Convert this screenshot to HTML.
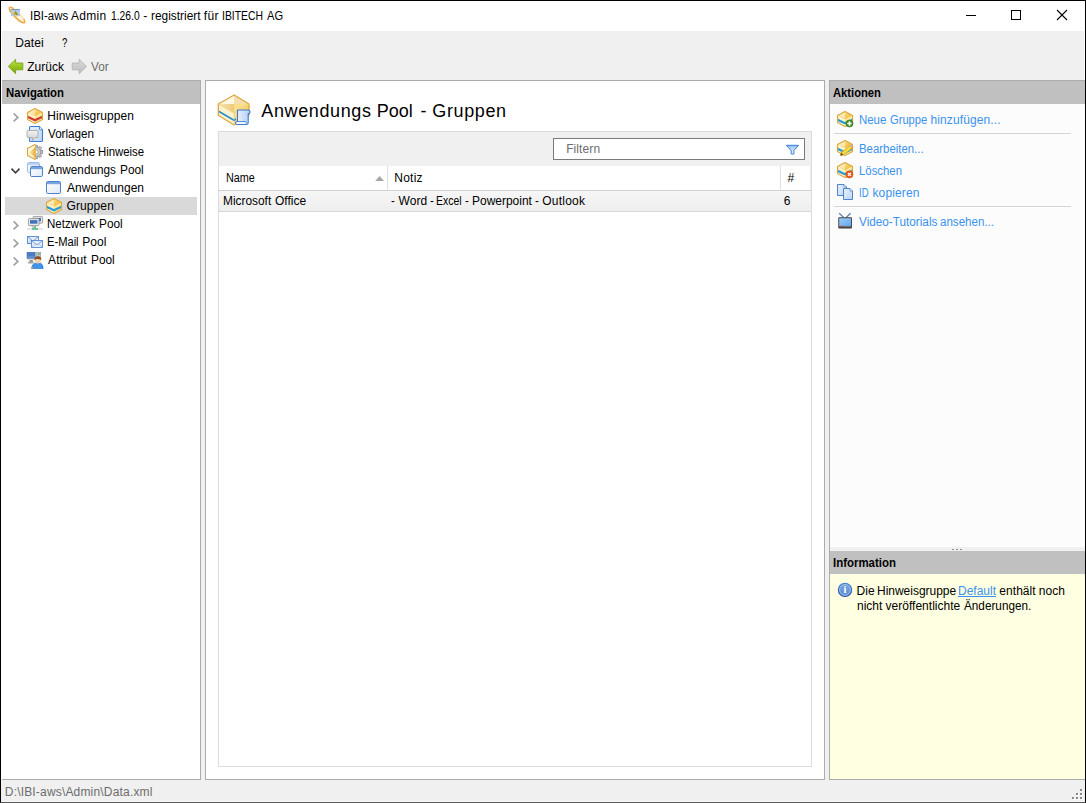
<!DOCTYPE html>
<html lang="de"><head><meta charset="utf-8"><title>IBI-aws Admin</title>
<style>
html,body{margin:0;padding:0;}
body{width:1086px;height:803px;overflow:hidden;background:#f0f0f0;position:relative;font-family:"Liberation Sans",sans-serif;font-size:12px;}
.a{position:absolute;box-sizing:border-box;}
.t{position:absolute;white-space:pre;transform-origin:0 0;font-family:"Liberation Sans",sans-serif;}
svg{position:absolute;overflow:visible;}
</style></head><body>

<div class="a" style="left:0;top:0;width:1086px;height:803px;border:1px solid #000;border-bottom-color:#555;z-index:50;pointer-events:none"></div>
<div class="a" style="left:1px;top:1px;width:1084px;height:30px;background:#fff"></div>
<div class="a" style="left:1px;top:31px;width:1px;height:749px;background:#fff;z-index:49"></div>
<div class="a" style="left:1084px;top:31px;width:1px;height:49px;background:#fff;z-index:49"></div>
<div class="a" style="left:1px;top:801px;width:1084px;height:1px;background:#fafafa;z-index:49"></div>
<!-- nav panel -->
<div class="a" style="left:2px;top:80px;width:199px;height:700px;background:#fff;border:1px solid #ababab;border-left:none"></div>
<div class="a" style="left:2px;top:81px;width:198px;height:23px;background:#c0c0c0"></div>
<div class="a" style="left:5px;top:197px;width:192px;height:18px;background:#d9d9d9"></div>
<!-- main panel -->
<div class="a" style="left:205px;top:80px;width:620px;height:700px;background:#fff;border:1px solid #ababab"></div>
<div class="a" style="left:218px;top:131px;width:594px;height:636px;background:#fff;border:1px solid #dcdcdc"></div>
<div class="a" style="left:219px;top:132px;width:592px;height:34px;background:#f0f0f0"></div>
<div class="a" style="left:553px;top:138px;width:252px;height:22px;background:#fff;border:1px solid #7a7a7a"></div>
<div class="a" style="left:219px;top:190px;width:592px;height:1px;background:#d0d0d0"></div>
<div class="a" style="left:387px;top:166px;width:1px;height:24px;background:#e0e0e0"></div>
<div class="a" style="left:780px;top:166px;width:1px;height:24px;background:#e0e0e0"></div>
<div class="a" style="left:810px;top:166px;width:1px;height:24px;background:#ececec"></div>
<div class="a" style="left:219px;top:191px;width:592px;height:20px;background:linear-gradient(#f6f6f6,#eeeeee)"></div>
<div class="a" style="left:219px;top:211px;width:592px;height:1px;background:#d8d8d8"></div>
<!-- right panel -->
<div class="a" style="left:829px;top:80px;width:256px;height:700px;background:#fcfcfc;border:1px solid #ababab;border-right:none"></div>
<div class="a" style="left:830px;top:81px;width:255px;height:23px;background:#c0c0c0"></div>
<div class="a" style="left:834px;top:133px;width:237px;height:1px;background:#d6d6d6"></div>
<div class="a" style="left:834px;top:206px;width:237px;height:1px;background:#d6d6d6"></div>
<div class="a" style="left:830px;top:547px;width:255px;height:4px;background:#f0f0f0"></div>
<div class="a" style="left:830px;top:551px;width:255px;height:23px;background:#c0c0c0"></div>
<div class="a" style="left:830px;top:574px;width:255px;height:205px;background:#ffffe1"></div>

<span class="t" style="left:29.62px;top:7.84px;font-size:12px;line-height:16px;color:#000;transform:scaleX(0.9528);">IBI-aws </span>
<span class="t" style="left:70.98px;top:7.84px;font-size:12px;line-height:16px;color:#000;letter-spacing:0.276px;">Admin </span>
<span class="t" style="left:110.69px;top:7.84px;font-size:12px;line-height:16px;color:#000;transform:scaleX(0.8598);">1.26.0 </span>
<span class="t" style="left:143.26px;top:7.84px;font-size:12px;line-height:16px;color:#000;">- </span>
<span class="t" style="left:150.97px;top:7.84px;font-size:12px;line-height:16px;color:#000;transform:scaleX(0.9914);">registriert </span>
<span class="t" style="left:203.78px;top:7.84px;font-size:12px;line-height:16px;color:#000;letter-spacing:0.324px;">für </span>
<span class="t" style="left:222.31px;top:7.84px;font-size:12px;line-height:16px;color:#000;transform:scaleX(0.8668);">IBITECH </span>
<span class="t" style="left:266.90px;top:7.84px;font-size:12px;line-height:16px;color:#000;transform:scaleX(0.9285);">AG</span>
<span class="t" style="left:15.30px;top:34.84px;font-size:12px;line-height:16px;color:#000;letter-spacing:0.104px;">Datei</span>
<span class="t" style="left:61.96px;top:34.84px;font-size:12px;line-height:16px;color:#000;transform:scaleX(0.8000);">?</span>
<span class="t" style="left:27.17px;top:58.84px;font-size:12px;line-height:16px;color:#000;letter-spacing:0.012px;">Zurück</span>
<span class="t" style="left:90.58px;top:58.84px;font-size:12px;line-height:16px;color:#6d6d6d;transform:scaleX(0.9747);">Vor</span>
<span class="t" style="left:5.61px;top:85.24px;font-size:12px;line-height:16px;color:#000;font-weight:700;transform:scaleX(0.9446);">Navigation</span>
<span class="t" style="left:833.41px;top:85.24px;font-size:12px;line-height:16px;color:#000;font-weight:700;transform:scaleX(0.9337);">Aktionen</span>
<span class="t" style="left:833.10px;top:555.24px;font-size:12px;line-height:16px;color:#000;font-weight:700;transform:scaleX(0.9525);">Information</span>
<span class="t" style="left:47.30px;top:107.84px;font-size:12px;line-height:16px;color:#000;letter-spacing:0.035px;">Hinweisgruppen</span>
<span class="t" style="left:48.08px;top:125.84px;font-size:12px;line-height:16px;color:#000;transform:scaleX(0.9711);">Vorlagen</span>
<span class="t" style="left:47.57px;top:143.84px;font-size:12px;line-height:16px;color:#000;transform:scaleX(0.9519);">Statische </span>
<span class="t" style="left:97.55px;top:143.84px;font-size:12px;line-height:16px;color:#000;transform:scaleX(0.9475);">Hinweise</span>
<span class="t" style="left:48.08px;top:161.84px;font-size:12px;line-height:16px;color:#000;transform:scaleX(0.9785);">Anwendungs </span>
<span class="t" style="left:119.81px;top:161.84px;font-size:12px;line-height:16px;color:#000;transform:scaleX(0.9873);">Pool</span>
<span class="t" style="left:66.98px;top:179.84px;font-size:12px;line-height:16px;color:#000;letter-spacing:0.034px;">Anwendungen</span>
<span class="t" style="left:66.59px;top:197.84px;font-size:12px;line-height:16px;color:#000;letter-spacing:0.089px;">Gruppen</span>
<span class="t" style="left:47.34px;top:215.84px;font-size:12px;line-height:16px;color:#000;transform:scaleX(0.9573);">Netzwerk </span>
<span class="t" style="left:98.71px;top:215.84px;font-size:12px;line-height:16px;color:#000;transform:scaleX(0.9873);">Pool</span>
<span class="t" style="left:47.37px;top:233.84px;font-size:12px;line-height:16px;color:#000;transform:scaleX(0.9292);">E-Mail </span>
<span class="t" style="left:82.30px;top:233.84px;font-size:12px;line-height:16px;color:#000;letter-spacing:0.072px;">Pool</span>
<span class="t" style="left:48.08px;top:251.84px;font-size:12px;line-height:16px;color:#000;letter-spacing:0.065px;">Attribut </span>
<span class="t" style="left:90.71px;top:251.84px;font-size:12px;line-height:16px;color:#000;transform:scaleX(0.9873);">Pool</span>
<span class="t" style="left:261.28px;top:98.76px;font-size:18px;line-height:24px;color:#000;letter-spacing:0.627px;">Anwendungs </span>
<span class="t" style="left:376.67px;top:98.76px;font-size:18px;line-height:24px;color:#000;letter-spacing:0.002px;">Pool </span>
<span class="t" style="left:420.47px;top:98.76px;font-size:18px;line-height:24px;color:#000;">- </span>
<span class="t" style="left:432.37px;top:98.76px;font-size:18px;line-height:24px;color:#000;letter-spacing:0.611px;">Gruppen</span>
<span class="t" style="left:566.20px;top:141.24px;font-size:12px;line-height:16px;color:#6d6d6d;letter-spacing:0.088px;">Filtern</span>
<span class="t" style="left:225.80px;top:169.84px;font-size:12px;line-height:16px;color:#000;transform:scaleX(0.9014);">Name</span>
<span class="t" style="left:394.30px;top:169.84px;font-size:12px;line-height:16px;color:#000;letter-spacing:0.219px;">Notiz</span>
<span class="t" style="left:787.48px;top:169.84px;font-size:12px;line-height:16px;color:#000;">#</span>
<span class="t" style="left:222.71px;top:192.84px;font-size:12px;line-height:16px;color:#000;transform:scaleX(0.9906);">Microsoft </span>
<span class="t" style="left:274.75px;top:192.84px;font-size:12px;line-height:16px;color:#000;transform:scaleX(0.9994);">Office</span>
<span class="t" style="left:391.29px;top:192.84px;font-size:12px;line-height:16px;color:#000;transform:scaleX(0.9534);">- </span>
<span class="t" style="left:398.43px;top:192.84px;font-size:12px;line-height:16px;color:#000;letter-spacing:0.136px;">Word </span>
<span class="t" style="left:430.39px;top:192.84px;font-size:12px;line-height:16px;color:#000;transform:scaleX(0.9534);">- </span>
<span class="t" style="left:436.43px;top:192.84px;font-size:12px;line-height:16px;color:#000;transform:scaleX(0.8687);">Excel </span>
<span class="t" style="left:465.39px;top:192.84px;font-size:12px;line-height:16px;color:#000;transform:scaleX(0.9534);">- </span>
<span class="t" style="left:471.50px;top:192.84px;font-size:12px;line-height:16px;color:#000;transform:scaleX(0.9973);">Powerpoint </span>
<span class="t" style="left:535.39px;top:192.84px;font-size:12px;line-height:16px;color:#000;transform:scaleX(0.9534);">- </span>
<span class="t" style="left:542.15px;top:192.84px;font-size:12px;line-height:16px;color:#000;letter-spacing:0.246px;">Outlook</span>
<span class="t" style="left:783.69px;top:192.84px;font-size:12px;line-height:16px;color:#000;">6</span>
<span class="t" style="left:858.75px;top:112.24px;font-size:12px;line-height:16px;color:#3a92ee;transform:scaleX(0.9529);">Neue </span>
<span class="t" style="left:890.23px;top:112.24px;font-size:12px;line-height:16px;color:#3a92ee;transform:scaleX(0.9307);">Gruppe </span>
<span class="t" style="left:930.44px;top:112.24px;font-size:12px;line-height:16px;color:#3a92ee;letter-spacing:0.118px;">hinzufügen...</span>
<span class="t" style="left:858.75px;top:141.24px;font-size:12px;line-height:16px;color:#3a92ee;transform:scaleX(0.9489);">Bearbeiten...</span>
<span class="t" style="left:858.75px;top:163.24px;font-size:12px;line-height:16px;color:#3a92ee;transform:scaleX(0.9481);">Löschen</span>
<span class="t" style="left:858.79px;top:185.24px;font-size:12px;line-height:16px;color:#3a92ee;transform:scaleX(0.8000);">ID </span>
<span class="t" style="left:872.47px;top:185.24px;font-size:12px;line-height:16px;color:#3a92ee;letter-spacing:0.131px;">kopieren</span>
<span class="t" style="left:859.48px;top:214.24px;font-size:12px;line-height:16px;color:#3a92ee;transform:scaleX(0.9794);">Video-Tutorials </span>
<span class="t" style="left:940.48px;top:214.24px;font-size:12px;line-height:16px;color:#3a92ee;transform:scaleX(0.9645);">ansehen...</span>
<span class="t" style="left:856.50px;top:583.44px;font-size:12px;line-height:16px;color:#000;letter-spacing:0.095px;">Die </span>
<span class="t" style="left:876.50px;top:583.44px;font-size:12px;line-height:16px;color:#000;transform:scaleX(0.9976);">Hinweisgruppe</span>
<span class="t" style="left:958.00px;top:583.44px;font-size:12px;line-height:16px;color:#3a92ee;transform:scaleX(0.9983);text-decoration:underline;">Default</span>
<span class="t" style="left:999.29px;top:583.44px;font-size:12px;line-height:16px;color:#000;letter-spacing:0.058px;">enthält </span>
<span class="t" style="left:1038.74px;top:583.44px;font-size:12px;line-height:16px;color:#000;letter-spacing:0.048px;">noch</span>
<span class="t" style="left:856.74px;top:598.44px;font-size:12px;line-height:16px;color:#000;transform:scaleX(0.9976);">nicht </span>
<span class="t" style="left:885.58px;top:598.44px;font-size:12px;line-height:16px;color:#000;letter-spacing:0.009px;">veröffentlichte </span>
<span class="t" style="left:963.98px;top:598.44px;font-size:12px;line-height:16px;color:#000;transform:scaleX(0.9789);">Änderungen.</span>
<span class="t" style="left:4.80px;top:784.24px;font-size:12px;line-height:16px;color:#6d6d6d;letter-spacing:0.177px;">D:\IBI-aws\Admin\Data.xml</span>

<svg class="ic" style="left:0;top:0;z-index:10" width="1086" height="803" viewBox="0 0 1086 803">

<defs>
<linearGradient id="gTop" x1="0" y1="0" x2="1" y2="1"><stop offset="0" stop-color="#fff6d8"/><stop offset="0.5" stop-color="#f8cf62"/><stop offset="1" stop-color="#f2b22e"/></linearGradient>
<linearGradient id="gLeft" x1="0" y1="0" x2="0" y2="1"><stop offset="0" stop-color="#fdeebb"/><stop offset="1" stop-color="#fffbe6"/></linearGradient>
<linearGradient id="gRight" x1="0" y1="0" x2="1" y2="1"><stop offset="0" stop-color="#fbe07a"/><stop offset="1" stop-color="#fdf2c0"/></linearGradient>
<linearGradient id="gGreen" x1="0" y1="0" x2="0" y2="1"><stop offset="0" stop-color="#c3e356"/><stop offset="0.5" stop-color="#98c61f"/><stop offset="1" stop-color="#78a512"/></linearGradient>
<linearGradient id="gGray" x1="0" y1="0" x2="0" y2="1"><stop offset="0" stop-color="#dcdcdc"/><stop offset="1" stop-color="#bcbcbc"/></linearGradient>
<linearGradient id="gWin" x1="0" y1="0" x2="1" y2="1"><stop offset="0" stop-color="#ffffff"/><stop offset="0.6" stop-color="#eef2fa"/><stop offset="1" stop-color="#dfe6f4"/></linearGradient>
<linearGradient id="gDoc" x1="0" y1="0" x2="1" y2="1"><stop offset="0" stop-color="#e8f1fd"/><stop offset="1" stop-color="#bcd5f5"/></linearGradient>
<linearGradient id="gBub" x1="0" y1="0" x2="0" y2="1"><stop offset="0" stop-color="#f2f2f2"/><stop offset="1" stop-color="#d0d0d0"/></linearGradient>
<linearGradient id="gInfo" x1="0" y1="0" x2="0" y2="1"><stop offset="0" stop-color="#7aa6de"/><stop offset="1" stop-color="#5b8fd2"/></linearGradient>
<linearGradient id="gInfoR" x1="0" y1="0" x2="0" y2="1"><stop offset="0" stop-color="#4a86d4"/><stop offset="1" stop-color="#2c4fa4"/></linearGradient>
<linearGradient id="gTv" x1="0" y1="0" x2="1" y2="1"><stop offset="0" stop-color="#9bcbf7"/><stop offset="1" stop-color="#62a8ee"/></linearGradient>
<linearGradient id="gFun" x1="0" y1="0" x2="0" y2="1"><stop offset="0" stop-color="#8fbdf0"/><stop offset="1" stop-color="#ffffff"/></linearGradient>
<linearGradient id="gScr" x1="0" y1="0" x2="1" y2="0"><stop offset="0" stop-color="#f4f8fe"/><stop offset="0.5" stop-color="#cfe0f8"/><stop offset="1" stop-color="#b4d0f4"/></linearGradient>
<linearGradient id="gBigR" x1="0" y1="0" x2="1" y2="1"><stop offset="0" stop-color="#fbe9b0"/><stop offset="1" stop-color="#f5bd3c"/></linearGradient>
<linearGradient id="gBigIn" x1="0" y1="0" x2="1" y2="0"><stop offset="0" stop-color="#f9e6b8"/><stop offset="1" stop-color="#efc878"/></linearGradient>
<linearGradient id="gHalf" x1="0" y1="0" x2="1" y2="0"><stop offset="0" stop-color="#fbe4a4"/><stop offset="1" stop-color="#f0b03a"/></linearGradient>
</defs>

<g><g transform="translate(17,15) rotate(45)"><ellipse cx="0" cy="0" rx="10.4" ry="2.8" fill="#fff3da" stroke="#f5cf8c" stroke-width="0.9"/><path d="M-10.4,0 A10.4,2.8 0 0 0 10.4,0" fill="none" stroke="#eaa63a" stroke-width="1.5"/><path d="M-10.6,0.6 A10.4,2.8 0 0 1 -6.6,-2.2" fill="none" stroke="#eeb04a" stroke-width="1.4"/><path d="M10.6,0.6 A10.4,2.8 0 0 0 7.6,-2" fill="none" stroke="#eeb04a" stroke-width="1.4"/></g><rect x="11" y="9" width="9" height="7" fill="#a9c9ec" opacity="0.92"/><rect x="11" y="9" width="9" height="1" fill="#7895b8"/><polygon points="15.6,10.6 18.3,15 13.2,15" fill="#a8901c"/><path d="M11.5,11.5 L17,16.6" stroke="#f1c46e" stroke-width="1.1" fill="none" opacity="0.8"/></g>
<polygon points="8.3,66.4 15.6,59.2 15.6,63 22.8,63 22.8,69.8 15.6,69.8 15.6,73.7" fill="url(#gGreen)" stroke="#7aa516" stroke-width="0.9" stroke-linejoin="round"/>
<polygon points="86.5,66.4 79.2,59.2 79.2,63 72.2,63 72.2,69.8 79.2,69.8 79.2,73.7" fill="url(#gGray)" stroke="#b4b4b4" stroke-width="0.9" stroke-linejoin="round"/>
<polyline points="13.6,113.4 17.8,117.4 13.6,121.4" fill="none" stroke="#a3a3a3" stroke-width="1.7"/>
<polyline points="13.6,221.4 17.8,225.4 13.6,229.4" fill="none" stroke="#a3a3a3" stroke-width="1.7"/>
<polyline points="13.6,239.4 17.8,243.4 13.6,247.4" fill="none" stroke="#a3a3a3" stroke-width="1.7"/>
<polyline points="13.6,257.4 17.8,261.4 13.6,265.4" fill="none" stroke="#a3a3a3" stroke-width="1.7"/>
<polyline points="11.5,168.6 15.5,172.8 19.5,168.6" fill="none" stroke="#404040" stroke-width="1.6"/>
<g transform="translate(27,108)"><polygon points="8,0.5 15.5,4.5 8,8.5 0.5,4.5" fill="url(#gTop)"/><polygon points="0.5,4.5 8,8.5 8,15.5 0.5,11.5" fill="url(#gLeft)"/><polygon points="8,8.5 15.5,4.5 15.5,11.5 8,15.5" fill="url(#gRight)"/><polygon points="8,1 8,8 2,4.6" fill="#fff" opacity="0.45"/><polygon points="1,7.8 8,11 15,7.8 15,10.3 8,13.6 1,10.3" fill="#cf3b2c"/><polygon points="8,0.5 15.5,4.5 15.5,11.5 8,15.5 0.5,11.5 0.5,4.5" fill="none" stroke="#dba83c" stroke-width="1.1" stroke-linejoin="round"/></g>
<g><path d="M30.5,126.5 H39.5 L42.5,129.8 V140.5 Q42.5,141.5 41.5,141.5 H30.5 Q29.5,141.5 29.5,140.5 V127.5 Q29.5,126.5 30.5,126.5 Z" fill="url(#gDoc)" stroke="#3f7dd0" stroke-width="1.1"/><path d="M39.5,126.5 V129.8 H42.5" fill="#eef5ff" stroke="#3f7dd0" stroke-width="0.8"/><path d="M28,130.5 H37 Q38,130.5 38,131.5 V136.5 Q38,137.5 37,137.5 H35 L32.3,140.6 V137.5 H28 Q27,137.5 27,136.5 V131.5 Q27,130.5 28,130.5 Z" fill="url(#gBub)" stroke="#a8a8a8" stroke-width="0.9"/></g>
<g><g transform="translate(36,152)"><g fill="#c2c2c2" stroke="#7d7d7d" stroke-width="0.6"><rect x="-1.5" y="-6.8" width="3" height="3.2" transform="rotate(0)"/><rect x="-1.5" y="-6.8" width="3" height="3.2" transform="rotate(45)"/><rect x="-1.5" y="-6.8" width="3" height="3.2" transform="rotate(90)"/><rect x="-1.5" y="-6.8" width="3" height="3.2" transform="rotate(135)"/><rect x="-1.5" y="-6.8" width="3" height="3.2" transform="rotate(180)"/><rect x="-1.5" y="-6.8" width="3" height="3.2" transform="rotate(225)"/><rect x="-1.5" y="-6.8" width="3" height="3.2" transform="rotate(270)"/><rect x="-1.5" y="-6.8" width="3" height="3.2" transform="rotate(315)"/></g><circle r="4.8" fill="#cdcdcd" stroke="#858585" stroke-width="0.6"/><circle r="2.1" fill="#fff" stroke="#8a8a8a" stroke-width="0.6"/></g><rect x="26" y="143" width="9.3" height="18" fill="#fff"/><polygon points="35.2,144.5 27.5,148.5 27.5,155.5 35.2,159.5" fill="#fdf1c9" stroke="#dba83c" stroke-width="1.1" stroke-linejoin="round"/><polygon points="35,147 35,157.6 29.6,152.3" fill="url(#gHalf)"/><polygon points="35,145.4 35,147 29.6,152.3 28.2,149" fill="#fffbea" opacity="0.9"/></g>
<g><rect x="27.5" y="162.5" width="12" height="10" rx="1.2" fill="url(#gWin)" stroke="#9dbbe6" stroke-width="1"/><rect x="28" y="163" width="11" height="2.2" fill="#bcd2f0"/></g>
<g><rect x="30.5" y="166.5" width="12" height="10" rx="1.2" fill="url(#gWin)" stroke="#4d82cc" stroke-width="1"/><rect x="31" y="167" width="11" height="2.2" fill="#76a5e0"/></g>
<g><rect x="46.5" y="181.5" width="14" height="12" rx="1.2" fill="url(#gWin)" stroke="#4d82cc" stroke-width="1"/><rect x="47" y="182" width="13" height="2.2" fill="#76a5e0"/></g>
<g transform="translate(46,198)"><polygon points="8,0.5 15.5,4.5 8,8.5 0.5,4.5" fill="url(#gTop)"/><polygon points="0.5,4.5 8,8.5 8,15.5 0.5,11.5" fill="url(#gLeft)"/><polygon points="8,8.5 15.5,4.5 15.5,11.5 8,15.5" fill="url(#gRight)"/><polygon points="8,1 8,8 2,4.6" fill="#fff" opacity="0.45"/><polygon points="1,7.8 8,11 15,7.8 15,10.3 8,13.6 1,10.3" fill="#2b9bd6"/><polygon points="8,0.5 15.5,4.5 15.5,11.5 8,15.5 0.5,11.5 0.5,4.5" fill="none" stroke="#dba83c" stroke-width="1.1" stroke-linejoin="round"/></g>
<g><rect x="33" y="216.4" width="9.6" height="6.8" rx="0.8" fill="#e9e9e9" stroke="#8c8c8c" stroke-width="0.8"/><rect x="34.6" y="217.9" width="6.3999999999999995" height="3.4" fill="#3f74bb"/><rect x="28.4" y="218.6" width="10.6" height="7" rx="0.8" fill="#e9e9e9" stroke="#8c8c8c" stroke-width="0.8"/><rect x="30.0" y="220.1" width="7.3999999999999995" height="3.6" fill="#3f74bb"/><rect x="32" y="225.6" width="3.4" height="1.6" fill="#c8c8c8" stroke="#9a9a9a" stroke-width="0.4"/><rect x="27" y="228.5" width="16" height="1" fill="#c9cdd2"/><rect x="32" y="228.3" width="6" height="1.4" fill="#3cb878"/><rect x="34.5" y="226.2" width="1.2" height="2.4" fill="#3cb878"/></g>
<g><rect x="27.5" y="236.5" width="11" height="7" fill="#e3edfb" stroke="#4d82cc" stroke-width="0.85"/><polyline points="28,237 33.0,240.96 38,237" fill="none" stroke="#6f9bd8" stroke-width="0.9"/><polyline points="28,243 31.32,239.84" fill="none" stroke="#9dbbe6" stroke-width="0.7"/><polyline points="38,243 34.68,239.84" fill="none" stroke="#9dbbe6" stroke-width="0.7"/></g>
<g><rect x="31.5" y="240.5" width="11" height="7" fill="#e3edfb" stroke="#4d82cc" stroke-width="0.85"/><polyline points="32,241 37.0,244.96 42,241" fill="none" stroke="#6f9bd8" stroke-width="0.9"/><polyline points="32,247 35.32,243.84" fill="none" stroke="#9dbbe6" stroke-width="0.7"/><polyline points="42,247 38.68,243.84" fill="none" stroke="#9dbbe6" stroke-width="0.7"/></g>
<g><rect x="27" y="252.2" width="8.2" height="6.4" fill="#4c7dc4" stroke="#3c66a8" stroke-width="0.5"/><rect x="27.8" y="256.6" width="6.6" height="0.8" fill="#88a9dc"/><rect x="27.4" y="258.8" width="7.4" height="1.2" fill="#d8d8d8"/><rect x="29.5" y="260" width="3.4" height="2.2" fill="#9a9a9a"/><rect x="28.2" y="262" width="5.6" height="1.2" rx="0.5" fill="#bdbdbd" stroke="#7a7a7a" stroke-width="0.4"/><rect x="36.6" y="252.2" width="4.2" height="6.5" fill="#c8c8c8" stroke="#8a8a8a" stroke-width="0.5"/><rect x="38" y="253.4" width="1.4" height="1.6" fill="#3cae3c"/><path d="M31.6,268.4 Q32,264 35,263.2 H40.6 Q43,264 43.2,268.4 Z" fill="#3f95ee" stroke="#2262c4" stroke-width="0.6"/><circle cx="37.8" cy="260.6" r="3" fill="#f6cfa6"/><path d="M34.4,260.2 Q34.2,256.2 38,256.2 Q41.6,256.4 41.2,260.2 Q39.5,258.6 36.4,259 Z" fill="#8e4a1c"/><rect x="31.3" y="266.6" width="1.5" height="1.8" fill="#f0a040"/></g>
<g><polygon points="234.2,95 218.3,104 234,104" fill="#fdf7e4"/><polygon points="234.2,95 249,104 234,104" fill="#f4dfac"/><polygon points="218.3,104 234,104 234,113" fill="url(#gBigIn)"/><polygon points="234,104 249,104 234,113" fill="#fadf86"/><polygon points="218.3,104 234,113 234,125 218.3,115.3" fill="#fdf2cd"/><polygon points="234,113 249,104 249,115.2 234,125" fill="url(#gBigR)"/><polygon points="219,110.6 234,119.2 236,118.2 236,120.2 234,121.2 219,112.6" fill="#2590d0"/><polygon points="234.2,95 249,104 249,115.2 234,125 218.3,115.3 218.3,104" fill="none" stroke="#dba83c" stroke-width="1.3" stroke-linejoin="round"/><polyline points="218.3,104 234,113 249,104" fill="none" stroke="#ecc66c" stroke-width="0.7"/><line x1="234" y1="113" x2="234" y2="125" stroke="#f0cf80" stroke-width="0.6"/><path d="M237.5,110 H248 Q250.2,110.2 250,112.4 Q249.8,113.8 248.2,113.6 V123 Q248,124.6 246.4,124.5 H236.8 Q235.4,124.3 235.6,122.8 Q235.8,121.6 237.5,121.6 Z" fill="url(#gScr)" stroke="#3a7ad2" stroke-width="1.1" stroke-linejoin="round"/><path d="M237.5,121.6 H245 Q246.4,121.8 246.3,123.2" fill="none" stroke="#3a7ad2" stroke-width="0.9"/><path d="M236.4,122.3 H245.4 V123.8 H236.4 Z" fill="#ffffff"/></g>
<polygon points="375.2,181 379.6,176 384,181" fill="#a6a6a6"/>
<g><path d="M786.3,145.3 H798.5 L793.9,150.6 V154 H791.2 V150.6 Z" fill="url(#gFun)" stroke="#3b7cd4" stroke-width="1" stroke-linejoin="round"/></g>
<g transform="translate(837,111)"><polygon points="8,0.5 15.5,4.5 8,8.5 0.5,4.5" fill="url(#gTop)"/><polygon points="0.5,4.5 8,8.5 8,15.5 0.5,11.5" fill="url(#gLeft)"/><polygon points="8,8.5 15.5,4.5 15.5,11.5 8,15.5" fill="url(#gRight)"/><polygon points="8,1 8,8 2,4.6" fill="#fff" opacity="0.45"/><polygon points="1,7.8 8,11 15,7.8 15,10.3 8,13.6 1,10.3" fill="#2b9bd6"/><polygon points="8,0.5 15.5,4.5 15.5,11.5 8,15.5 0.5,11.5 0.5,4.5" fill="none" stroke="#dba83c" stroke-width="1.1" stroke-linejoin="round"/></g>
<g><circle cx="849.5" cy="123.5" r="3.6" fill="#3e8c1e" stroke="#2f7414" stroke-width="0.5"/><path d="M849.5,121.3 V125.7 M847.3,123.5 H851.7" stroke="#fff" stroke-width="1.5"/></g>
<g transform="translate(837,140)"><polygon points="8,0.5 15.5,4.5 8,8.5 0.5,4.5" fill="url(#gTop)"/><polygon points="0.5,4.5 8,8.5 8,15.5 0.5,11.5" fill="url(#gLeft)"/><polygon points="8,8.5 15.5,4.5 15.5,11.5 8,15.5" fill="url(#gRight)"/><polygon points="8,1 8,8 2,4.6" fill="#fff" opacity="0.45"/><polygon points="1,7.8 8,11 15,7.8 15,10.3 8,13.6 1,10.3" fill="#2b9bd6"/><polygon points="8,0.5 15.5,4.5 15.5,11.5 8,15.5 0.5,11.5 0.5,4.5" fill="none" stroke="#dba83c" stroke-width="1.1" stroke-linejoin="round"/></g>
<g><polygon points="840.3,155.6 841.2,152.6 849.8,145.6 852.2,148.2 843.4,155" fill="#f7d93c" stroke="#c89a20" stroke-width="0.6"/><polygon points="849.8,145.6 851,144.6 853.2,147 852.2,148.2" fill="#f3b0a8" stroke="#c88a80" stroke-width="0.4"/><polygon points="840.3,155.6 841.2,152.6 843.4,155" fill="#6b4a2a"/></g>
<g transform="translate(837,162)"><polygon points="8,0.5 15.5,4.5 8,8.5 0.5,4.5" fill="url(#gTop)"/><polygon points="0.5,4.5 8,8.5 8,15.5 0.5,11.5" fill="url(#gLeft)"/><polygon points="8,8.5 15.5,4.5 15.5,11.5 8,15.5" fill="url(#gRight)"/><polygon points="8,1 8,8 2,4.6" fill="#fff" opacity="0.45"/><polygon points="1,7.8 8,11 15,7.8 15,10.3 8,13.6 1,10.3" fill="#2b9bd6"/><polygon points="8,0.5 15.5,4.5 15.5,11.5 8,15.5 0.5,11.5 0.5,4.5" fill="none" stroke="#dba83c" stroke-width="1.1" stroke-linejoin="round"/></g>
<g><circle cx="849.4" cy="174.4" r="3.6" fill="#e8591c" stroke="#c8430c" stroke-width="0.5"/><path d="M847.9,172.9 L850.9,175.9 M850.9,172.9 L847.9,175.9" stroke="#fff" stroke-width="1.3"/></g>
<g><path d="M837.5,184.5 H844 L846.5,187 V195.5 H837.5 Z" fill="url(#gDoc)" stroke="#4d82cc" stroke-width="1" stroke-linejoin="round"/><path d="M844,184.5 V187 H846.5" fill="#f4f8ff" stroke="#4d82cc" stroke-width="0.7"/></g>
<g><path d="M843.5,188.5 H850 L852.5,191 V199.5 H843.5 Z" fill="url(#gDoc)" stroke="#4d82cc" stroke-width="1" stroke-linejoin="round"/><path d="M850,188.5 V191 H852.5" fill="#f4f8ff" stroke="#4d82cc" stroke-width="0.7"/></g>
<g><path d="M839.2,213.2 L843.6,217.4 M850.6,213.2 L846.2,217.4" stroke="#5b7bab" stroke-width="1.3"/><rect x="838.3" y="217.3" width="13.6" height="11.2" rx="0.8" fill="#3a3a3a"/><rect x="839.2" y="218.2" width="11.8" height="8" fill="url(#gTv)"/><rect x="839.2" y="225.9" width="11.8" height="1.3" fill="#707070"/><rect x="841" y="225.8" width="1.4" height="1.4" fill="#ff2020"/></g>
<g fill="#8c8c8c"><rect x="952" y="549" width="2" height="1"/><rect x="956" y="549" width="2" height="1"/><rect x="960" y="549" width="2" height="1"/></g>
<g><circle cx="845" cy="589.9" r="6.6" fill="url(#gInfo)" stroke="url(#gInfoR)" stroke-width="1.2"/><circle cx="845" cy="589.9" r="5.4" fill="none" stroke="#a9c8ee" stroke-width="0.8"/><text x="845" y="593.3" text-anchor="middle" font-family="Liberation Serif, serif" font-weight="700" font-size="10.5" fill="#fff">i</text></g>
<rect x="966" y="15" width="10" height="1" fill="#000"/>
<rect x="1011.5" y="10.5" width="9" height="9" fill="none" stroke="#000" stroke-width="1"/>
<path d="M1057,10 L1067,20 M1067,10 L1057,20" stroke="#000" stroke-width="1.1"/>
<g><rect x="1081" y="790" width="2" height="2" fill="#ffffff"/><rect x="1080" y="789" width="2" height="2" fill="#8a8a8a"/><rect x="1077" y="794" width="2" height="2" fill="#ffffff"/><rect x="1076" y="793" width="2" height="2" fill="#8a8a8a"/><rect x="1081" y="794" width="2" height="2" fill="#ffffff"/><rect x="1080" y="793" width="2" height="2" fill="#8a8a8a"/><rect x="1073" y="798" width="2" height="2" fill="#ffffff"/><rect x="1072" y="797" width="2" height="2" fill="#8a8a8a"/><rect x="1077" y="798" width="2" height="2" fill="#ffffff"/><rect x="1076" y="797" width="2" height="2" fill="#8a8a8a"/><rect x="1081" y="798" width="2" height="2" fill="#ffffff"/><rect x="1080" y="797" width="2" height="2" fill="#8a8a8a"/></g>
</svg>

</body></html>
